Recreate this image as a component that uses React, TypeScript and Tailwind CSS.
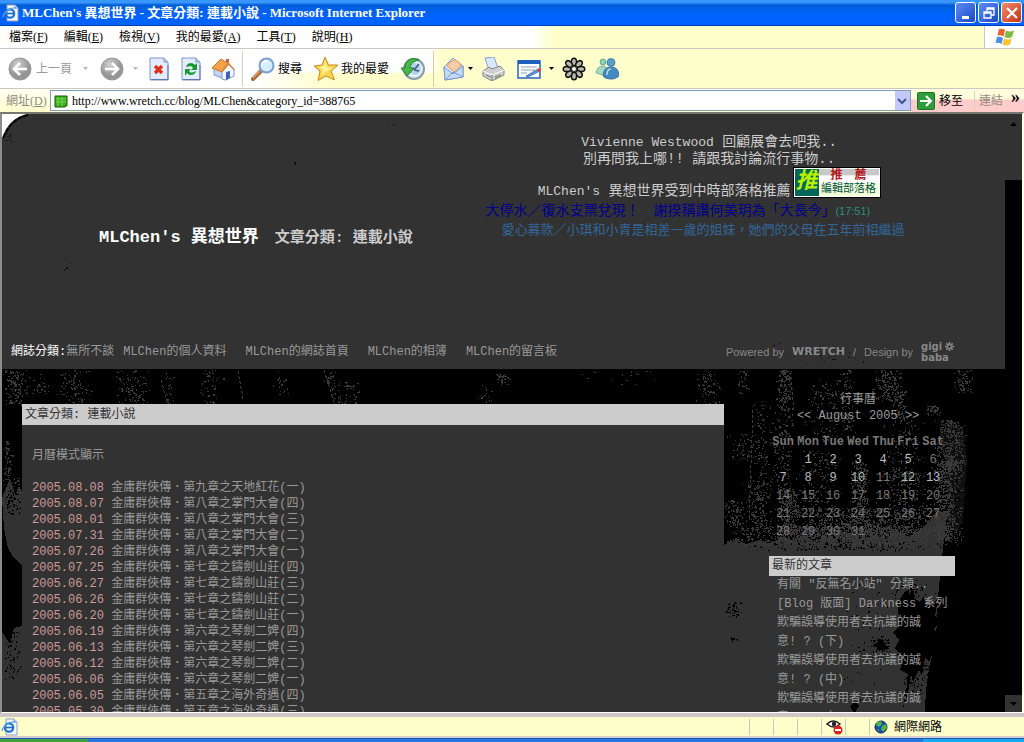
import type { ReactNode } from 'react';

const menus = [
  { label: '檔案', key: 'F' },
  { label: '編輯', key: 'E' },
  { label: '檢視', key: 'V' },
  { label: '我的最愛', key: 'A' },
  { label: '工具', key: 'T' },
  { label: '說明', key: 'H' },
];

const blogLinks = ['MLChen的個人資料', 'MLChen的網誌首頁', 'MLChen的相簿', 'MLChen的留言板'];

const articles = [
  { date: '2005.08.08', title: '第九章之天地紅花(一)' },
  { date: '2005.08.07', title: '第八章之掌門大會(四)' },
  { date: '2005.08.01', title: '第八章之掌門大會(三)' },
  { date: '2005.07.31', title: '第八章之掌門大會(二)' },
  { date: '2005.07.26', title: '第八章之掌門大會(一)' },
  { date: '2005.07.25', title: '第七章之鑄劍山莊(四)' },
  { date: '2005.06.27', title: '第七章之鑄劍山莊(三)' },
  { date: '2005.06.26', title: '第七章之鑄劍山莊(二)' },
  { date: '2005.06.20', title: '第七章之鑄劍山莊(一)' },
  { date: '2005.06.19', title: '第六章之琴劍二婢(四)' },
  { date: '2005.06.13', title: '第六章之琴劍二婢(三)' },
  { date: '2005.06.12', title: '第六章之琴劍二婢(二)' },
  { date: '2005.06.06', title: '第六章之琴劍二婢(一)' },
  { date: '2005.06.05', title: '第五章之海外奇遇(四)' },
  { date: '2005.05.30', title: '第五章之海外奇遇(三)' },
];

const latest = [
  '有關 "反無名小站" 分類..',
  '[Blog 版面] Darkness 系列',
  '欺騙誤導使用者去抗議的誠\n意! ? (下)',
  '欺騙誤導使用者去抗議的誠\n意! ? (中)',
  '欺騙誤導使用者去抗議的誠\n意! ? (上)',
];

const weekdays = ['Sun', 'Mon', 'Tue', 'Wed', 'Thu', 'Fri', 'Sat'];
const postDays = [1, 2, 3, 4, 5, 7, 8, 9, 10, 12, 13];
// August 2005 starts on a Monday
const weeks = [0, 1, 2, 3, 4].map((w) => weekdays.map((_, d) => w * 7 + d));

/* x, y, width, height, number of specks */
const lightAreas = [
  [2, 370, 26, 34, 130], [28, 372, 24, 22, 25], [56, 370, 34, 34, 75], [114, 370, 38, 34, 85],
  [164, 370, 10, 34, 20], [198, 370, 26, 33, 50], [270, 370, 20, 26, 18], [322, 370, 14, 12, 20],
  [328, 382, 34, 22, 60], [476, 384, 20, 20, 15], [494, 373, 16, 12, 35], [562, 370, 110, 14, 15],
  [694, 372, 30, 32, 60], [700, 370, 14, 26, 25], [734, 370, 16, 24, 30], [726, 434, 40, 26, 60],
  [750, 400, 22, 130, 130], [776, 370, 18, 40, 140], [770, 410, 24, 80, 130], [800, 380, 60, 60, 150],
  [840, 370, 14, 60, 80], [870, 370, 34, 30, 170], [890, 390, 18, 30, 90], [952, 370, 22, 22, 80],
  [926, 405, 14, 10, 45], [934, 420, 32, 50, 400], [880, 420, 50, 60, 140], [930, 460, 34, 80, 600],
  [776, 488, 24, 46, 320], [848, 462, 22, 60, 280], [794, 450, 50, 60, 170], [874, 470, 60, 50, 260],
  [724, 500, 20, 26, 90], [740, 480, 36, 50, 130], [724, 526, 240, 20, 1300], [770, 508, 190, 28, 900],
  [2, 440, 10, 66, 90], [10, 476, 12, 30, 40],
];

const darkAreas = [
  [724, 540, 236, 10, 170], [724, 602, 18, 14, 50], [724, 636, 14, 4, 10], [870, 636, 22, 16, 70],
  [846, 580, 60, 50, 35], [840, 640, 60, 60, 30], [890, 580, 40, 20, 60], [900, 660, 40, 34, 100],
  [934, 590, 16, 60, 60], [2, 490, 20, 24, 70], [2, 620, 20, 60, 70], [950, 470, 14, 90, 50],
];

const headerAreas = [
  [722, 345, 190, 18, 40], [4, 132, 10, 10, 8], [60, 262, 12, 8, 5], [384, 120, 12, 6, 3],
  [290, 160, 8, 4, 2], [768, 340, 12, 5, 2],
];

function specks(areas: number[][]) {
  let seed = 41;
  const next = () => {
    seed = (seed * 1103515245 + 12345) % 2147483648;
    return seed / 2147483648;
  };
  let d = '';
  for (const [x, y, w, h, n] of areas) {
    for (let i = 0; i < n; i++) {
      // two throws averaged, so that specks gather near the middle
      const px = Math.round(x + (w * (next() + next())) / 2);
      const py = Math.round(y + h * next());
      const len = next() > 0.7 ? 2 : 1;
      const tall = next() > 0.75 ? 2 : 1;
      d += `M${px} ${py}h${len}v${tall}h-${len}z`;
    }
  }
  return d;
}

function Grunge() {
  return (
    <svg
      className="absolute inset-0 h-full w-full"
      viewBox="2 369 1003 344"
      preserveAspectRatio="xMinYMin slice"
      shapeRendering="crispEdges"
      aria-hidden="true"
    >
      <rect x="2" y="369" width="1003" height="344" fill="#000" />
      <path d="M724 545l12-6 10 5 14-4 10 4 14-8 8 5 12-6 10 6 16-4 12 5 8-10 10 8 14-5 12 4 10-8 14 6 12-9 8-8 8-10 9 4-2 20-4 30-3 34-2 40-8 36-3 30 1 46H2V632l8 12 4-16 8-2v-60l-8-8-6-10-4-20-2-30 8-20 5 16 4-8 5 10v49z" fill="#323232" />
      <path d="M940 430l14-8 10 8 3 30-4 60-8 16-8-14 4-24-6-12 4-20-8-14z" fill="#323232" opacity="0.3" />
      <g fill="#000">
        <path d="M2 545l6 8 6 10 8 3v60l-6-2-6-12-8-6z" />
        <path d="M898 602l8-12 4 6 2-14 2 16 6 4 4-6 1 8 12 2-2 10 5 4-6 10 8 4 10-10 3 12-8 8-12 4-6 14-4-4-3 18-3-6-6 12-2-8-4 26-2 2 3-28-8-4 4-12-9-10 4-8-6-8 6-6z" />
        <path d="M930 606l12-12 14-16v6l-10 14-12 12zM905 690l-2 20 4-22zM924 702l18-8 8-6-4 8-18 8zM876 644l4-6 5 6 4 5-12 1zM850 706l5-4 4 4-5 8z" />
        <path d="M964 540l-4 30-2 30-6 8-2 40-3 20v46h60V540z" />
      </g>
      <path d="M238 371l5 28M161 380l6 22M324 370l10 32M60 374l14 12 20 6M116 376l12 12 18 14M753 410l-4 110M790 372l4 40M894 382l12 30" stroke="#3c3c3c" strokeDasharray="3 2" fill="none" />
      <path d={specks(lightAreas)} fill="#3a3a3a" />
      <path d={specks(darkAreas)} fill="#000" />
    </svg>
  );
}

function PageIcon() {
  return (
    <svg className="size-[18px] shrink-0" viewBox="0 0 18 18" aria-hidden="true">
      <path d="M5 1h8l3 3v13H5z" fill="#f4f7ff" stroke="#8b9fc8" />
      <path d="M13 1v3h3" fill="#c9d6ee" stroke="#8b9fc8" />
      <circle cx="8" cy="9.5" r="4.2" fill="none" stroke="#1e72cf" strokeWidth="2.2" />
      <path d="M4.500 9.500h8" stroke="#1e72cf" strokeWidth="1.700" />
      <path d="M1 13C2 8 8 3 14 4" fill="none" stroke="#54a4ea" strokeWidth="1.300" />
    </svg>
  );
}

function RoundArrow({ forward }: { forward?: boolean }) {
  return (
    <svg className="size-6" viewBox="0 0 24 24" aria-hidden="true">
      <defs>
        <radialGradient id="disc" cx="40%" cy="30%">
          <stop offset="0" stopColor="#d2d2d2" />
          <stop offset="1" stopColor="#959595" />
        </radialGradient>
      </defs>
      <circle cx="12" cy="12" r="11" fill="url(#disc)" stroke="#999" />
      <path
        d={forward ? 'M5 12h12M12 6l6 6-6 6' : 'M19 12H7M12 6l-6 6 6 6'}
        fill="none"
        stroke="#fff"
        strokeWidth="2.6"
      />
    </svg>
  );
}

function Sheet({ children }: { children: ReactNode }) {
  return (
    <svg className="size-6" viewBox="0 0 24 24" aria-hidden="true">
      <path d="M3 1h14l4 4v18H3z" fill="#e3ecfd" stroke="#7d96cf" />
      <path d="M4 22.500h17V8" fill="none" stroke="#5c77b8" />
      <path d="M17 1v4h4" fill="#b6c8ee" stroke="#7d96cf" />
      {children}
    </svg>
  );
}

function HomeIcon() {
  return (
    <svg className="size-6" viewBox="0 0 24 24" aria-hidden="true">
      <path d="M15 2h3v6h-3z" fill="#c9614a" />
      <path d="M3 12l5-8 8 7v12L3 18z" fill="#c1d5f6" stroke="#7b9cd4" />
      <path d="M11 14l6-7 6 6v6l-9 4-3-1z" fill="#f2f6ff" stroke="#7b9cd4" />
      <path d="M1 11L10 2l8 5-7 8z" fill="#f3a24a" stroke="#c77424" />
      <path d="M11 14l6-8 6.500 7" fill="none" stroke="#dd8c3a" strokeWidth="1.500" />
      <path d="M15 15l4-1v7l-4 2z" fill="#3e63b6" />
    </svg>
  );
}

function SearchIcon() {
  return (
    <svg className="size-6" viewBox="0 0 24 24" aria-hidden="true">
      <path d="M10 14l-8 8" stroke="#a26a3d" strokeWidth="4" strokeLinecap="round" />
      <path d="M9 14l-7 7" stroke="#dfa56e" strokeWidth="1.500" />
      <circle cx="15.500" cy="8.500" r="7" fill="#d5efff" stroke="#7b9ed4" strokeWidth="2" />
      <path d="M11 8q1-4 5-4" fill="none" stroke="#fff" strokeWidth="2" />
    </svg>
  );
}

function StarIcon() {
  return (
    <svg className="size-6" viewBox="0 0 24 24" aria-hidden="true">
      <path d="M11 0l3.500 8H24l-7 6 3.500 9-8.500-4-8 4.500L6 14 0 9l8-1z" fill="#ffd64d" stroke="#c68a1e" strokeLinejoin="round" />
      <path d="M11 4l2 6 6 1-6 3-5 4 1-5-4-3 5-1z" fill="#fff29a" />
    </svg>
  );
}

function HistoryIcon() {
  return (
    <svg className="size-6" viewBox="0 0 24 24" aria-hidden="true">
      <circle cx="13" cy="12" r="10" fill="#dceaf8" stroke="#8899a8" strokeWidth="2" />
      <circle cx="14" cy="12" r="6.500" fill="#b4d1ee" stroke="#fff" />
      <path d="M13 13l5-6M13 13l5 1" stroke="#3c567c" strokeWidth="1.500" />
      <path d="M18 3C11-1 3 4 4 11H0l6 8 7-8H9c0-4 4-7 9-8z" fill="#49b649" stroke="#20812c" />
    </svg>
  );
}

function MailIcon() {
  return (
    <svg className="size-6" viewBox="0 0 24 24" aria-hidden="true">
      <path d="M2 10L11 1l10 8v11L3 23z" fill="#dbe9fd" stroke="#7a97cf" />
      <path d="M5 9q3-6 8-6 5 1 6 6l-7 6z" fill="#f8cda5" stroke="#d9a06e" />
      <path d="M2 10l9 7 10-8v11L3 23z" fill="#c4dcfb" stroke="#7a97cf" />
      <path d="M3 23l8-8 10 5" fill="none" stroke="#7a97cf" />
    </svg>
  );
}

function PrintIcon() {
  return (
    <svg className="size-6" viewBox="0 0 24 24" aria-hidden="true">
      <path d="M4 1l9-1 4 11-9 2z" fill="#d9e8ff" stroke="#86a0d0" />
      <path d="M2 14l6-4 3 2 8-3 4 4v5l-12 6-9-5z" fill="#cfcfd3" stroke="#85858c" />
      <path d="M2 14l9 4 12-5" fill="none" stroke="#fff" />
      <path d="M11 18v5M5 18l5 2" stroke="#77777d" />
      <path d="M14 19l6-2v2l-6 3z" fill="#8ca27c" />
    </svg>
  );
}

function EditIcon() {
  return (
    <svg className="h-6 w-[26px]" viewBox="0 0 26 24" aria-hidden="true">
      <path d="M2 4h22v17H2z" fill="#fff" stroke="#2663bd" strokeWidth="1.500" />
      <path d="M2 3h22v4H2z" fill="#1e60c0" />
      <path d="M5 10h16M5 13h14M5 16h6" stroke="#8a9bb5" />
      <path d="M10 19l12-7 2 2-12 6z" fill="#5d9ae8" stroke="#2d559e" strokeWidth="0.700" />
      <path d="M21 12l3-1 1 3-3 1z" fill="#dc4630" />
    </svg>
  );
}

function FlowerIcon() {
  return (
    <svg className="size-6" viewBox="0 0 24 24" aria-hidden="true">
      {[0, 45, 90, 135, 180, 225, 270, 315].map((a) => (
        <ellipse key={a} cx="12" cy="5" rx="2.6" ry="3.800" fill="#b9b9ae" stroke="#111" strokeWidth="1.500" transform={`rotate(${a} 12 12)`} />
      ))}
      <circle cx="12" cy="12" r="2.500" fill="#fff" stroke="#222" />
    </svg>
  );
}

function MessengerIcon() {
  return (
    <svg className="size-6" viewBox="0 0 24 24" aria-hidden="true">
      <circle cx="8" cy="5" r="3" fill="#8bd3ad" stroke="#4a8f86" strokeWidth="0.700" />
      <path d="M1 16q1-7 7-7 5 1 5 7l-5 2z" fill="#a4dcc0" stroke="#5a9c9b" strokeWidth="0.700" />
      <circle cx="16" cy="5.500" r="4" fill="#5a9fc9" stroke="#2f6a9c" strokeWidth="0.700" />
      <path d="M8 19q0-9 8-9t8 9q-4 4-9 3-5 0-7-3z" fill="#4787c4" stroke="#27609e" strokeWidth="0.700" />
      <path d="M12 18q0-6 4-6" fill="none" stroke="#b9e5d0" strokeWidth="1.500" />
    </svg>
  );
}

function WindowsFlag() {
  return (
    <svg className="h-[18px] w-5" viewBox="0 0 20 18" aria-hidden="true">
      <path d="M4 1q3-1 6 1L8.500 8.500q-3-2-6-1z" fill="#e8602c" />
      <path d="M11 2.500q4 2 8 0L17 9q-4 2-7.500 0z" fill="#7dbb42" />
      <path d="M2 9q3-1 6 1l-1.500 6q-3-2-6-1z" fill="#4a8ee6" />
      <path d="M9 10.500q4 2 7.500 0L15 16.500q-4 2-7.500 0z" fill="#f7c52e" />
    </svg>
  );
}

function Globe() {
  return (
    <svg className="size-[14px] shrink-0" viewBox="0 0 14 14" aria-hidden="true">
      <circle cx="7" cy="7" r="6" fill="#174fae" stroke="#0a234f" />
      <path d="M3 2l4-1 1 3-3 3-3-2zM8 6l4-2 1 4-4 4-2-3zM3 9l2 1v2z" fill="#4cb848" />
    </svg>
  );
}

function Caret({ muted }: { muted?: boolean }) {
  return (
    <svg className="h-1 w-[5px]" viewBox="0 0 5 4" aria-hidden="true">
      <path d="M0 0h5L2.500 3z" fill={muted ? '#b5b5b5' : '#000'} />
    </svg>
  );
}

function TitleBar() {
  return (
    <header className="flex h-[26px] shrink-0 items-center justify-between bg-linear-to-b from-[#3796ff] from-10% via-[#005fd6] via-20% to-[#0062ff] to-60% border-b border-[#003fc0] pl-[2px] pr-[2px]">
      <div className="flex items-center gap-[2px]">
        <PageIcon />
        <h1 className="whitespace-nowrap text-[13px] font-bold text-white">MLChen's 異想世界 - 文章分類: 連載小說 - Microsoft Internet Explorer</h1>
      </div>
      <div className="flex gap-[2px]">
        <button aria-label="Minimize" className="flex size-[21px] items-center justify-center rounded-[3px] border border-white bg-linear-to-br from-[#5d8cf5] to-[#1c48c8]">
          <svg className="size-4" viewBox="0 0 16 16"><path d="M4 11h7v3H4z" fill="#fff" /></svg>
        </button>
        <button aria-label="Restore" className="flex size-[21px] items-center justify-center rounded-[3px] border border-white bg-linear-to-br from-[#5d8cf5] to-[#1c48c8]">
          <svg className="size-4" viewBox="0 0 16 16"><path d="M6 6V3h7v7h-3M3 7h7v6H3zM3 8h7M6 4h7" fill="none" stroke="#fff" strokeWidth="1.300" /></svg>
        </button>
        <button aria-label="Close" className="flex size-[21px] items-center justify-center rounded-[3px] border border-white bg-linear-to-br from-[#ee8a6c] to-[#c42f0c]">
          <svg className="size-4" viewBox="0 0 16 16"><path d="M3 3l10 10M13 3L3 13" stroke="#fff" strokeWidth="2.200" /></svg>
        </button>
      </div>
    </header>
  );
}

function MenuBar() {
  return (
    <div className="flex h-[23px] shrink-0 border-b border-[#ccc8c0] bg-linear-to-r from-white from-52% to-[#ffffcc] to-54%">
      <nav className="flex flex-1 items-center gap-4 pl-[9px]">
        {menus.map((m) => (
          <button key={m.key} className="whitespace-nowrap text-xs">
            {m.label}(<u>{m.key}</u>)
          </button>
        ))}
      </nav>
      <div className="flex w-10 items-center justify-center border-l border-[#ccc8c0] bg-white">
        <WindowsFlag />
      </div>
    </div>
  );
}

function Toolbar() {
  return (
    <div className="flex h-10 shrink-0 items-center border-b border-[#ccc8c0] bg-[linear-gradient(90deg,transparent_42%,#ffffcc_43%),linear-gradient(180deg,white_55%,transparent_65%),linear-gradient(90deg,white_25%,#ffffcc_32%)] pl-2 text-xs">
      <button className="flex items-center gap-1 text-[#999]">
        <RoundArrow />
        上一頁
      </button>
      <span className="ml-[11px]"><Caret muted /></span>
      <button aria-label="下一頁" className="ml-3"><RoundArrow forward /></button>
      <span className="ml-[9px]"><Caret muted /></span>
      <button aria-label="停止" className="ml-[9px]">
        <Sheet><path d="M8 9l7 7M15 9l-7 7" stroke="#e02f12" strokeWidth="3.200" /></Sheet>
      </button>
      <button aria-label="重新整理" className="ml-2">
        <Sheet>
          <path d="M7 10c1-5 7-5 9-2l2-2v7h-6l2-2c-2-3-4-1-7-1zM17 14c-1 5-7 5-9 2l-2 3v-7h6l-2 2c2 3 4 1 7 0z" fill="#189a31" />
        </Sheet>
      </button>
      <button aria-label="首頁" className="ml-2"><HomeIcon /></button>
      <div className="ml-[7px] h-9 w-px bg-[#d8d2bd]" />
      <button className="ml-2 flex items-center gap-[3px]"><SearchIcon />搜尋</button>
      <button className="ml-3 flex items-center gap-[3px]"><StarIcon />我的最愛</button>
      <button aria-label="記錄" className="ml-3"><HistoryIcon /></button>
      <div className="ml-2 h-9 w-px bg-[#d0ccb0]" />
      <button aria-label="郵件" className="ml-2 flex items-center gap-[2px]"><MailIcon /><Caret /></button>
      <button aria-label="列印" className="ml-2"><PrintIcon /></button>
      <button aria-label="編輯" className="ml-[11px] flex items-center gap-[7px]"><EditIcon /><Caret /></button>
      <button aria-label="ICQ" className="ml-2"><FlowerIcon /></button>
      <button aria-label="Messenger" className="ml-[9px]"><MessengerIcon /></button>
    </div>
  );
}

function AddressBar() {
  return (
    <div className="flex h-[23px] shrink-0 items-stretch bg-linear-to-b from-[#fffff4] to-[#ffffcc] text-xs">
      <label htmlFor="address" className="flex w-[50px] shrink-0 items-center whitespace-nowrap pl-[6px] text-[#8c8c80]">
        網址(<u>D</u>)
      </label>
      <div className="my-px flex flex-1 items-center gap-[2px] border border-[#7f9db9] bg-white pl-[3px]">
        <svg className="size-[14px] shrink-0" viewBox="0 0 14 14" aria-hidden="true">
          <path d="M1 2h12v10h-2v1H1z" fill="#3fae1c" stroke="#125c08" />
          <path d="M2 5h10M2 8h10M4 3v9M8 3v9" stroke="#72d84e" />
        </svg>
        <input
          id="address"
          className="min-w-0 flex-1 px-[2px] text-xs text-black outline-none"
          defaultValue="http://www.wretch.cc/blog/MLChen&category_id=388765"
        />
        <button aria-label="顯示網址清單" className="flex h-full w-[15px] items-center justify-center bg-[#c5c8fb]">
          <svg className="size-[10px]" viewBox="0 0 10 10"><path d="M1 3l4 4 4-4" fill="none" stroke="#3c568c" strokeWidth="2" /></svg>
        </button>
      </div>
      <div className="flex items-center bg-linear-to-b from-[#ffffdc] from-40% to-[#ffcccc] to-50% pl-[6px]">
        <button className="flex items-center gap-1">
          <svg className="size-[18px]" viewBox="0 0 18 18" aria-hidden="true">
            <rect x="0.500" y="0.500" width="17" height="17" rx="1" fill="#2f9b3c" stroke="#1b7429" />
            <path d="M3 9h11M9 4l5 5-5 5" fill="none" stroke="#fff" strokeWidth="2" />
          </svg>
          移至
        </button>
        <span className="ml-[11px] h-5 w-px bg-[#ddcfc0]" />
        <button className="ml-1 text-[#8f8a80]">連結</button>
        <button aria-label="更多連結" className="ml-2 mr-1 pb-2 text-[18px]/4 font-bold">»</button>
      </div>
    </div>
  );
}

function BlogHeader() {
  return (
    <section className="relative flex min-h-[255px] flex-col justify-between overflow-hidden bg-[#323232]">
      <svg className="absolute left-0 top-0 h-[255px] w-full" viewBox="2 114 1003 255" preserveAspectRatio="xMinYMin slice" aria-hidden="true">
        <path d="M2 114h25Q9 118 2 138z" fill="#fff" />
        <path d="M28 115Q10 119 3 139" fill="none" stroke="#000" strokeWidth="2" strokeDasharray="5 1" />
        <path d={specks(headerAreas)} fill="#111" shapeRendering="crispEdges" />
      </svg>
      <div className="relative grid grid-cols-[47fr_47fr_6fr]">
        <div className="flex items-baseline gap-4 whitespace-nowrap pl-[97px] pt-[111px] font-bold">
          <h2 className="text-[17px] text-white">MLChen's 異想世界</h2>
          <span className="text-[15px] text-[#ccc]">文章分類: 連載小說</span>
        </div>
        <div className="whitespace-nowrap pt-5 text-center text-sm/4 text-[#ccc]">
          <p><span className="text-[13px]">Vivienne Westwood</span> 回顧展會去吧我..</p>
          <p>別再問我上哪!! 請跟我討論流行事物..</p>
          <div className="flex items-end justify-center">
            <p><span className="text-[13px]">MLChen's</span> 異想世界受到中時部落格推薦</p>
            <a href="#recommend" className="mb-[2px] ml-[2px] flex h-[31px] w-[88px] shrink-0 border border-black bg-white p-px">
              <span className="flex w-6 items-center justify-center bg-[#00665a] text-[22px] font-bold italic text-[#b8f000]">推</span>
              <span className="flex flex-1 flex-col">
                <b className="bg-linear-to-b from-[#c8c8c8] from-40% to-white to-50% text-xs/[14px] text-[#b01818]">推　薦</b>
                <span className="bg-[#f4ffd8] text-[11px]/[13px] text-[#005048]">編輯部落格</span>
              </span>
            </a>
          </div>
          <p className="mt-[3px] pl-3 text-left text-[#00008b]">
            大停水／復水支票兌現！　謝揆稱讚何美玥為「大長今」
            <span className="font-['Liberation_Sans'] text-[11px] text-[#2e8b7b]">(17:51)</span>
          </p>
          <p className="mt-1 pl-7 text-left text-[13px]/4 text-[#336699]">愛心募款／小琪和小青是相差一歲的姐妹，她們的父母在五年前相繼過</p>
        </div>
      </div>
      <div className="relative flex items-center justify-between whitespace-nowrap pb-[6px] pl-[9px] pr-[42px] text-xs text-[#999]">
        <nav className="flex gap-[19px]">
          <div className="-mr-[10px] text-white">網誌分類:<a href="#category" className="text-[#999]">無所不談</a></div>
          {blogLinks.map((l) => (
            <a key={l} href="#blog">{l}</a>
          ))}
        </nav>
        <div className="flex items-center gap-2 font-['Liberation_Sans'] text-[11px] text-[#888]">
          <span>Powered by</span>
          <b className="font-['DejaVu_Sans']">WRETCH</b>
          <span>/</span>
          <span>Design by</span>
          <a href="#design" className="flex w-[42px] flex-col font-['DejaVu_Sans'] text-[10px]/[11px] font-bold">
            <span className="flex items-center gap-[2px]">
              gigi
              <svg className="size-[11px]" viewBox="0 0 12 12" aria-hidden="true"><path d="M6 1v10M1 6h10M2.500 2.500l7 7M9.500 2.500l-7 7" stroke="#888" strokeWidth="1.800" /><circle cx="6" cy="6" r="1.500" fill="#323232" /></svg>
            </span>
            <span>baba</span>
          </a>
        </div>
      </div>
    </section>
  );
}

function Calendar() {
  return (
    <div className="pr-2 text-center text-[#999]">
      <p className="text-xs/4">行事曆</p>
      <p className="text-xs/4">
        <a href="#prev">&lt;&lt;</a> August 2005 <a href="#next">&gt;&gt;</a>
      </p>
      <table className="mx-auto mt-[9px] w-[175px] table-fixed text-xs/[18px]">
        <thead>
          <tr className="text-[#777]">
            {weekdays.map((d) => (
              <th key={d}>{d}</th>
            ))}
          </tr>
        </thead>
        <tbody>
          {weeks.map((week) => (
            <tr key={week[0]}>
              {week.map((day) => (
                <td key={day} className={postDays.includes(day) ? 'text-[#bbb]' : 'text-[#777]'}>
                  {day > 0 && day < 32 ? day : ''}
                </td>
              ))}
            </tr>
          ))}
        </tbody>
      </table>
    </div>
  );
}

function Blog() {
  return (
    <div className="flex min-w-0 flex-1 flex-col overflow-hidden bg-black font-['Liberation_Mono','Noto_Sans_CJK_TC',monospace]">
      <BlogHeader />
      <section className="relative flex min-h-0 flex-1 items-start overflow-hidden">
        <Grunge />
        <main className="relative ml-5 mt-[35px] w-[70%] bg-[#323232] text-xs/4 text-[#999]">
          <h3 className="bg-[#ccc] px-[3px] pt-px text-xs/5 text-[#333]">文章分類: 連載小說</h3>
          <div className="px-[10px] pt-[23px]">
            <a href="#month">月曆模式顯示</a>
            <ul className="mt-4">
              {articles.map((a) => (
                <li key={a.date}>
                  <span className="text-[#cc9999]">{a.date}</span> <a href="#article">金庸群俠傳．{a.title}</a>
                </li>
              ))}
            </ul>
          </div>
        </main>
        <aside className="relative ml-[45px] mt-[23px] w-[186px] shrink-0">
          <Calendar />
          <h3 className="mt-[15px] bg-[#ccc] px-[3px] text-xs/5 text-[#333]">最新的文章</h3>
          <ul className="pl-2 text-xs/[19px] text-[#999]">
            {latest.map((t) => (
              <li key={t}><a href="#latest" className="block whitespace-pre">{t}</a></li>
            ))}
          </ul>
        </aside>
      </section>
    </div>
  );
}

function ScrollBar() {
  return (
    <div className="flex w-[17px] shrink-0 flex-col justify-between bg-black">
      <button aria-label="向上捲動" className="flex h-[66px] justify-center bg-[#323232] pt-2">
        <svg className="h-1 w-[7px]" viewBox="0 0 7 4"><path d="M0 4l3.500-4L7 4z" fill="#000" /></svg>
      </button>
      <button aria-label="向下捲動" className="flex h-[17px] items-center justify-center bg-[#323232]">
        <svg className="h-1 w-[7px]" viewBox="0 0 7 4"><path d="M0 0h7L3.500 4z" fill="#000" /></svg>
      </button>
    </div>
  );
}

function StatusBar() {
  return (
    <footer className="shrink-0">
      <div className="flex h-[25px] items-center border-b-2 border-t-4 border-b-[#d5cccc] border-t-[#d0c6c6] bg-[#ffffcc] text-xs">
        <div className="flex-1 pl-px"><PageIcon /></div>
        <div className="h-4 w-6 border-l border-[#ccc8c0]" />
        <div className="h-4 w-6 border-l border-[#ccc8c0]" />
        <div className="h-4 w-6 border-l border-[#ccc8c0]" />
        <div className="flex h-4 w-6 items-center border-l border-[#ccc8c0] pl-1">
          <svg className="h-4 w-[18px] shrink-0" viewBox="0 0 18 16" aria-hidden="true">
            <path d="M1 5q6-6 13 0-6 6-13 0z" fill="#fff" stroke="#222" strokeWidth="1.500" />
            <circle cx="8" cy="5" r="2.200" fill="#222" />
            <circle cx="12" cy="11" r="4.500" fill="#e02020" />
            <path d="M9 11h6" stroke="#fff" strokeWidth="2" />
          </svg>
        </div>
        <div className="h-4 w-6 border-l border-[#ccc8c0]" />
        <div className="flex h-4 w-[155px] items-center gap-[6px] border-l border-[#ccc8c0] pl-1">
          <Globe />
          網際網路
        </div>
      </div>
      <div className="flex h-1 border-t border-[#1a56b8] bg-[#2a76e0]">
        <div className="w-[88px] bg-[#3fa13f]" />
        <div className="flex-1" />
        <div className="w-[101px] bg-[#18a8f0]" />
      </div>
    </footer>
  );
}

export default function App() {
  return (
    <div className="flex h-screen flex-col overflow-hidden bg-white font-['Liberation_Serif','Noto_Sans_CJK_TC',serif] text-black">
      <TitleBar />
      <MenuBar />
      <Toolbar />
      <AddressBar />
      <div className="flex min-h-0 flex-1 border-b border-l-2 border-r-2 border-t-2 border-b-white border-l-[#8c8c88] border-r-[#ffffdd] border-t-[#77776f]">
        <Blog />
        <ScrollBar />
      </div>
      <StatusBar />
    </div>
  );
}
